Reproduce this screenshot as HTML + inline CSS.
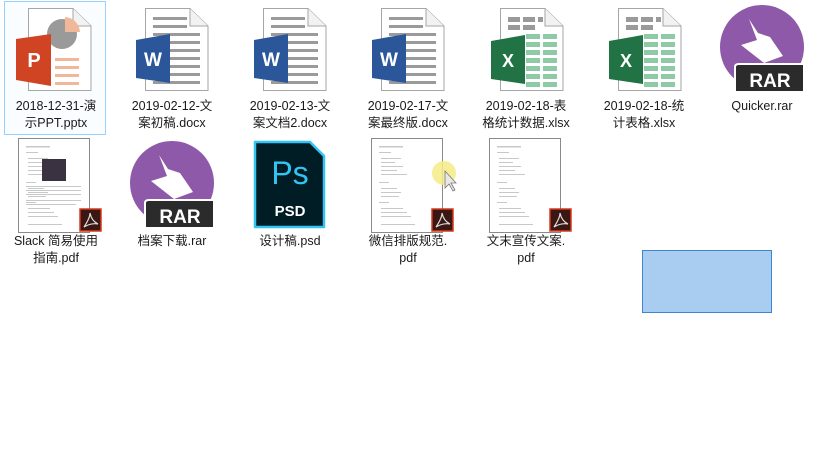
<!DOCTYPE html>
<html><head><meta charset="utf-8"><style>
body{margin:0;width:820px;height:473px;background:#fff;position:relative;overflow:hidden;font-family:"Liberation Sans","Noto Sans CJK SC",sans-serif;}
.l{position:absolute;width:110px;text-align:center;font-size:12.5px;line-height:17px;color:#1a1a1a;}
svg{position:absolute;left:0;top:0;}
</style></head><body>
<div style="position:absolute;left:4px;top:1px;width:100px;height:132px;border:1px solid #99d1ff;background:#fafdff"></div>
<svg width="820" height="473">
<defs>
<g id="page"><path d="M0.5,0.5 H45 L63,18 V82.5 H0.5 Z" fill="#fff" stroke="#a6a6a6"/><path d="M45,0.5 V18 H63" fill="#f2f2f2" stroke="#a6a6a6"/></g>
<g id="word"><use href="#page"/>
<g fill="#9a9a9a"><rect x="8" y="9" width="34" height="3"/><rect x="8" y="17" width="34" height="3"/><rect x="8" y="25" width="47" height="3"/><rect x="8" y="33" width="47" height="3"/><rect x="8" y="41" width="47" height="3"/><rect x="8" y="49" width="47" height="3"/><rect x="8" y="57" width="47" height="3"/><rect x="8" y="65" width="47" height="3"/><rect x="8" y="73" width="47" height="3"/></g>
<path d="M-9,32 L25,26 V75 L-9,70 Z" fill="#2b579a"/>
<text x="8" y="58" font-size="19" font-weight="bold" fill="#fff" text-anchor="middle" font-family="Liberation Sans">W</text></g>
<g id="xl"><use href="#page"/>
<g fill="#9a9a9a"><rect x="8" y="9" width="12" height="5"/><rect x="23" y="9" width="12" height="5"/><rect x="38" y="9" width="5" height="5"/><rect x="8" y="17" width="12" height="5"/><rect x="23" y="17" width="12" height="5"/></g>
<g fill="#8fcaa6"><rect x="26" y="26" width="14" height="5"/><rect x="43" y="26" width="14" height="5"/><rect x="26" y="34" width="14" height="5"/><rect x="43" y="34" width="14" height="5"/><rect x="26" y="42" width="14" height="5"/><rect x="43" y="42" width="14" height="5"/><rect x="26" y="50" width="14" height="5"/><rect x="43" y="50" width="14" height="5"/><rect x="26" y="58" width="14" height="5"/><rect x="43" y="58" width="14" height="5"/><rect x="26" y="66" width="14" height="5"/><rect x="43" y="66" width="14" height="5"/><rect x="26" y="74" width="14" height="5"/><rect x="43" y="74" width="14" height="5"/></g>
<path d="M-9,33 L25,27 V76 L-9,71 Z" fill="#217346"/>
<text x="8" y="59" font-size="18" font-weight="bold" fill="#fff" text-anchor="middle" font-family="Liberation Sans">X</text></g>
<g id="rar"><circle cx="0" cy="0" r="42" fill="#8d59a8"/>
<path d="M-13,-28 L-4,-14 L8,-10 L21,9 L2,16 L-21,-2 L-5,-7 Z" fill="#fff"/>
<path d="M-27,20 Q-27,17 -23,17 H42 V45 H-27 Z" fill="#2b2b2b" stroke="#fff" stroke-width="2"/>
<text x="8" y="40" font-size="19" font-weight="bold" fill="#fff" text-anchor="middle" font-family="Liberation Sans">RAR</text></g>
<g id="pdfb"><rect x="0" y="0" width="21" height="22" fill="#3b1714" stroke="#d8391d" stroke-width="1.5"/><path d="M4,18 C8,12 10,8 10,4 C11,9 14,13 18,15 C13,14 9,15 4,18 Z" fill="none" stroke="#ddd" stroke-width="1.2"/></g>
<g id="pdfp"><rect x="0.5" y="0.5" width="71" height="94" fill="#fff" stroke="#8a8a8a"/>
<g fill="#c8c8c8"><rect x="8" y="8" width="24" height="1.5"/><rect x="8" y="14" width="12" height="1"/><rect x="10" y="20" width="20" height="1"/><rect x="10" y="24" width="14" height="1"/><rect x="10" y="28" width="22" height="1"/><rect x="10" y="32" width="16" height="1"/><rect x="10" y="36" width="26" height="1"/><rect x="8" y="44" width="10" height="1"/><rect x="10" y="50" width="16" height="1"/><rect x="10" y="54" width="20" height="1"/><rect x="10" y="58" width="18" height="1"/><rect x="8" y="64" width="10" height="1"/><rect x="10" y="70" width="22" height="1"/><rect x="10" y="74" width="26" height="1"/><rect x="10" y="78" width="30" height="1"/><rect x="10" y="86" width="34" height="1"/></g></g>
</defs>
<g transform="translate(28,8)"><use href="#page"/>
<circle cx="34" cy="26" r="15" fill="#9a9a9a"/><path d="M37,9 A16,16 0 0 1 52,24 H37 Z" fill="#f0b799"/>
<g fill="#f0b799"><rect x="27" y="50" width="24" height="3"/><rect x="27" y="58" width="24" height="3"/><rect x="27" y="66" width="24" height="3"/><rect x="27" y="74" width="24" height="3"/></g>
<path d="M-12,31 L23,26 V78 L-12,72 Z" fill="#d04423"/>
<text x="6" y="59" font-size="20" font-weight="bold" fill="#fff" text-anchor="middle" font-family="Liberation Sans">P</text></g>
<use href="#word" transform="translate(145,8)"/>
<use href="#word" transform="translate(263,8)"/>
<use href="#word" transform="translate(381,8)"/>
<use href="#xl" transform="translate(500,8)"/>
<use href="#xl" transform="translate(618,8)"/>
<use href="#rar" transform="translate(762,47)"/>
<use href="#pdfp" transform="translate(18,138)"/>
<rect x="42" y="159" width="24" height="22" fill="#3a3240"/>
<g fill="#c8c8c8"><rect x="26" y="186" width="55" height="1"/><rect x="26" y="190" width="55" height="1"/><rect x="26" y="194" width="55" height="1"/><rect x="26" y="200" width="55" height="1"/><rect x="26" y="204" width="50" height="1"/></g>
<use href="#pdfb" transform="translate(80,209)"/>
<use href="#rar" transform="translate(172,183)"/>
<path d="M255,142 H310 L324,156 V227 H255 Z" fill="#001d26" stroke="#31c5f4" stroke-width="2.5" stroke-linejoin="round"/>
<text x="290" y="184" font-size="32" fill="#31c5f4" text-anchor="middle" font-family="Liberation Sans">Ps</text>
<text x="290" y="216" font-size="15" font-weight="bold" fill="#fff" text-anchor="middle" font-family="Liberation Sans">PSD</text>
<use href="#pdfp" transform="translate(371,138)"/>
<use href="#pdfb" transform="translate(432,209)"/>
<circle cx="444" cy="173" r="12" fill="#f5ec85" opacity="0.85"/>
<path d="M445,171 V188 L449,184 L453,191 L455,190 L451,183 L456,183 Z" fill="#e8e8e8" stroke="#777" stroke-width="0.8"/>
<use href="#pdfp" transform="translate(489,138)"/>
<use href="#pdfb" transform="translate(550,209)"/>
<rect x="642.5" y="250.5" width="129" height="62" fill="#a9cdf0" stroke="#3d86d6"/>
</svg>
<div class="l" style="left:1px;top:98px">2018-12-31-演<br>示PPT.pptx</div>
<div class="l" style="left:117px;top:98px">2019-02-12-文<br>案初稿.docx</div>
<div class="l" style="left:235px;top:98px">2019-02-13-文<br>案文档2.docx</div>
<div class="l" style="left:353px;top:98px">2019-02-17-文<br>案最终版.docx</div>
<div class="l" style="left:471px;top:98px">2019-02-18-表<br>格统计数据.xlsx</div>
<div class="l" style="left:589px;top:98px">2019-02-18-统<br>计表格.xlsx</div>
<div class="l" style="left:707px;top:98px">Quicker.rar</div>
<div class="l" style="left:1px;top:233px">Slack 简易使用<br>指南.pdf</div>
<div class="l" style="left:117px;top:233px">档案下载.rar</div>
<div class="l" style="left:235px;top:233px">设计稿.psd</div>
<div class="l" style="left:353px;top:233px">微信排版规范.<br>pdf</div>
<div class="l" style="left:471px;top:233px">文末宣传文案.<br>pdf</div>
</body></html>
